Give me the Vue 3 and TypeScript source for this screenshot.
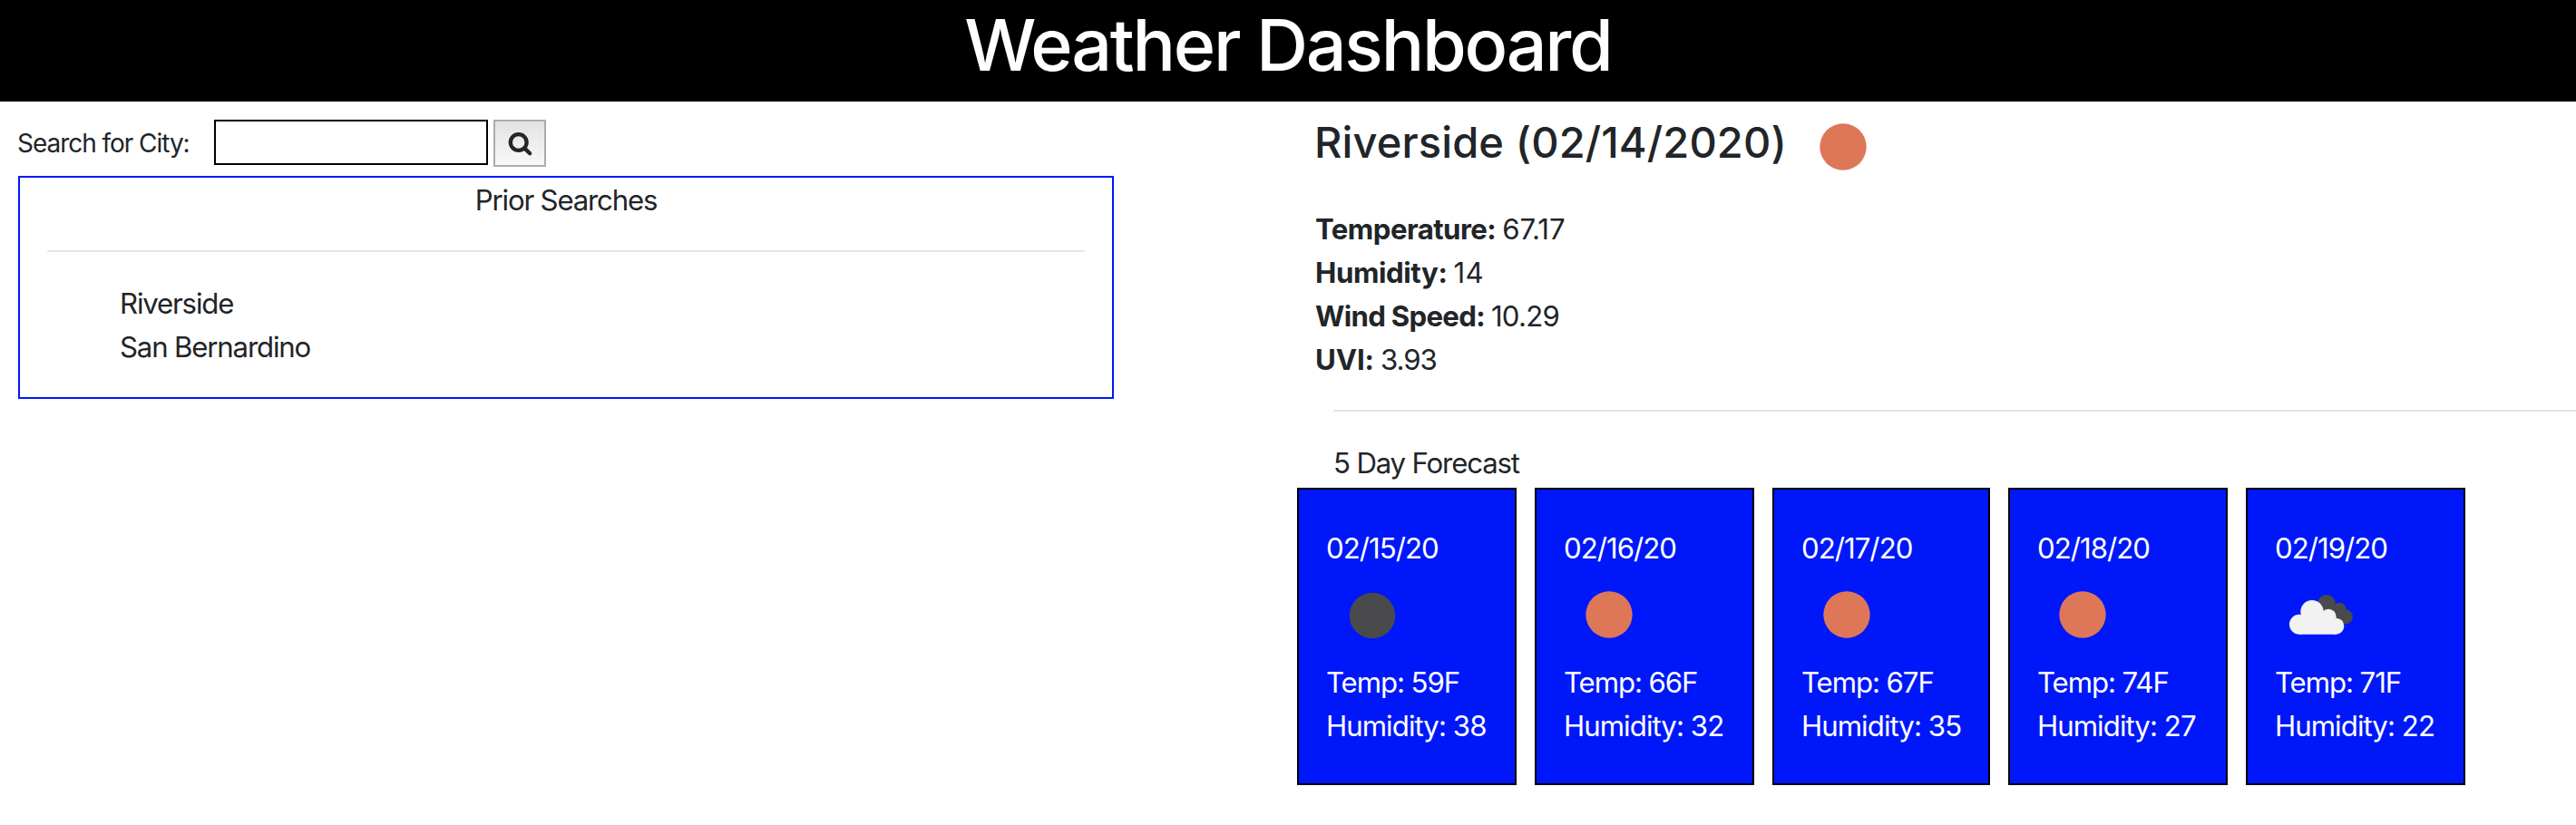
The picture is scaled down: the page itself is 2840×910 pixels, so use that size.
<script setup lang="ts">
import { ref } from 'vue'

type Sky = 'sun' | 'night' | 'clouds'

interface Reading {
  key: string
  label: string
  value: string
}

interface Day {
  date: string
  sky: Sky
  temp: number
  humidity: number
}

const city = ref('')
const priorSearches = ref<string[]>(['Riverside', 'San Bernardino'])

const readings: Reading[] = [
  { key: 'temperature', label: 'Temperature:', value: '67.17' },
  { key: 'humidity', label: 'Humidity:', value: '14' },
  { key: 'wind', label: 'Wind Speed:', value: '10.29' },
  { key: 'uvi', label: 'UVI:', value: '3.93' },
]

const forecast: Day[] = [
  { date: '02/15/20', sky: 'night', temp: 59, humidity: 38 },
  { date: '02/16/20', sky: 'sun', temp: 66, humidity: 32 },
  { date: '02/17/20', sky: 'sun', temp: 67, humidity: 35 },
  { date: '02/18/20', sky: 'sun', temp: 74, humidity: 27 },
  { date: '02/19/20', sky: 'clouds', temp: 71, humidity: 22 },
]
</script>

<template>
  <div class="page">
    <header class="banner"><h1>Weather Dashboard</h1></header>
    <main class="columns">
      <section class="left">
        <form class="search" @submit.prevent>
          <label for="city">Search for City:</label>
          <input id="city" v-model="city" type="text" />
          <button type="submit" aria-label="Search">
            <svg viewBox="0 0 54 48" width="54" height="48">
              <circle cx="25.7" cy="23" r="8.9" />
              <path d="M32.4 29.6 38.2 35.3" />
            </svg>
          </button>
        </form>
        <div class="history">
          <p class="history-title">Prior Searches</p>
          <hr />
          <ul>
            <li v-for="name in priorSearches" :key="name">{{ name }}</li>
          </ul>
        </div>
      </section>

      <section class="right">
        <div class="current">
          <h3>Riverside (02/14/2020)</h3>
          <svg class="sky" viewBox="0 0 100 100"><circle class="sun" cx="50" cy="50" r="25.7" /></svg>
        </div>
        <dl class="readings">
          <div v-for="r in readings" :key="r.key" :class="r.key">
            <dt>{{ r.label }}</dt>
            <dd>{{ r.value }}</dd>
          </div>
        </dl>
        <hr />
        <p class="forecast-title">5 Day Forecast</p>
        <div class="forecast">
          <article v-for="d in forecast" :key="d.date" class="day">
            <p class="date">{{ d.date }}</p>
            <svg class="sky" viewBox="0 0 100 100">
              <circle v-if="d.sky === 'sun'" class="sun" cx="50" cy="50" r="25.7" />
              <circle v-else-if="d.sky === 'night'" class="dark" cx="51" cy="51" r="25.2" />
              <g v-else transform="translate(7 17) scale(0.33333)">
                <g class="dark">
                  <circle cx="150" cy="62" r="29" />
                  <circle cx="193" cy="80" r="21" />
                  <circle cx="213" cy="106" r="24" />
                  <path d="M125 75 150 45 193 70 215 110 205 128 180 125Z" />
                </g>
                <g class="light">
                  <circle cx="60" cy="131" r="33" />
                  <circle cx="102" cy="89" r="38" />
                  <circle cx="156" cy="106" r="26" />
                  <circle cx="181" cy="137" r="27" />
                  <path d="M60 164 60 110 100 80 160 100 190 130 181 164Z" />
                </g>
              </g>
            </svg>
            <p class="temp">Temp: {{ d.temp }}F</p>
            <p class="hum">Humidity: {{ d.humidity }}</p>
          </article>
        </div>
      </section>
    </main>
  </div>
</template>

<style>
body {
  margin: 0;
  background: #fff;
}
</style>

<style scoped>
.page {
  min-height: 910px;
  overflow: hidden;
  color: #212529;
  font: 400 31.2px/48px Inter, 'Liberation Sans', sans-serif;
}
p, h1, h3, ul, dl, dd {
  margin: 0;
  padding: 0;
}
hr {
  height: 2px;
  margin: 0;
  border: 0;
  background: rgba(0, 0, 0, 0.1);
}
.banner {
  box-sizing: border-box;
  height: 112px;
  padding-top: 1px;
  background: #000;
  color: #fff;
  text-align: center;
}
h1 {
  font-size: 79px;
  font-weight: 500;
  line-height: 96px;
  letter-spacing: -2.26px;
}
.columns {
  display: grid;
  grid-template-columns: 1430px 1410px;
}
.left {
  padding: 20px 0 0 20px;
}
.search {
  display: flex;
  align-items: flex-start;
  height: 62px;
}
.search label {
  flex: 0 0 216px;
  margin-top: 9px;
  font-size: 28px;
  line-height: 34px;
  letter-spacing: -1.04px;
  text-indent: -1px;
}
.search input {
  box-sizing: border-box;
  width: 302px;
  height: 50px;
  padding: 0 8px;
  border: 2px solid #000;
  border-radius: 0;
  background: #fff;
  font: inherit;
  outline: none;
}
.search button {
  box-sizing: border-box;
  width: 58px;
  height: 52px;
  margin-left: 6px;
  padding: 0;
  border: 2px solid #acacac;
  border-radius: 0;
  background: linear-gradient(#e3e3e3, #f8f8f8);
}
.search svg {
  display: block;
  fill: none;
  stroke: #252525;
  stroke-width: 4.3;
  stroke-linecap: round;
}
.history {
  box-sizing: border-box;
  width: 1208px;
  height: 246px;
  padding: 1px 30px 0;
  border: 2px solid #0018f9;
}
.history-title {
  text-align: center;
  letter-spacing: -1.18px;
}
.history hr {
  margin: 31px 0 33px;
}
.history ul {
  padding-left: 80px;
  list-style: none;
  letter-spacing: -1.17px;
}
.current {
  display: flex;
  height: 117px;
  padding-left: 19px;
  gap: 12px;
}
h3 {
  padding-top: 16px;
  font-size: 47px;
  font-weight: 500;
  line-height: 57px;
  letter-spacing: 0.12px;
  white-space: nowrap;
}
.sky {
  display: block;
  flex: none;
  width: 100px;
  height: 100px;
}
.sun {
  fill: #de7758;
}
.dark {
  fill: #4a4a4c;
}
.light {
  fill: #f2f2f2;
}
.readings {
  padding-left: 20px;
}
.readings div {
  display: flex;
  gap: 7px;
}
dt {
  font-weight: 700;
}
.temperature dt { letter-spacing: -0.55px; }
.temperature dd { letter-spacing: -0.1px; }
.humidity dt { letter-spacing: -0.4px; }
.humidity dd { letter-spacing: 0.4px; }
.wind dt { letter-spacing: -0.7px; }
.wind dd { letter-spacing: -0.75px; }
.uvi dt { letter-spacing: -0.1px; }
.uvi dd { letter-spacing: -1px; }
.right hr {
  margin: 31px 0 33px 40px;
}
.forecast-title {
  padding-left: 40px;
  letter-spacing: -1.17px;
}
.forecast {
  display: grid;
  grid-template-columns: 242px 242px 240px 242px 242px;
  gap: 20px;
  margin-top: 3px;
}
.day {
  box-sizing: border-box;
  height: 328px;
  padding: 41px 0 0 30px;
  border: 2px solid #000;
  background: #0018f9;
  color: #fff;
  white-space: nowrap;
}
.day .sky {
  margin: -1px 0 1px;
}
.date { letter-spacing: -0.98px; }
.temp { letter-spacing: -1.08px; }
.hum { letter-spacing: -0.94px; }
</style>
